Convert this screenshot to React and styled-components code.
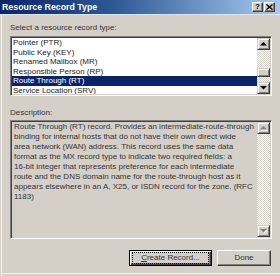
import React from 'react'
import styled, { createGlobalStyle } from 'styled-components'

const GlobalStyle = createGlobalStyle`
html, body {
    margin:0;
    padding:0;
    background:#d4d0c8;
}
body {
    font-family:"Liberation Sans", Arial, sans-serif;
}
`

const records = [
    'Pointer (PTR)',
    'Public Key (KEY)',
    'Renamed Mailbox (MR)',
    'Responsible Person (RP)',
    'Route Through (RT)',
    'Service Location (SRV)',
]

const description = [
    'Route Through (RT) record. Provides an intermediate-route-through',
    'binding for internal hosts that do not have their own direct wide',
    'area network (WAN) address. This record uses the same data',
    'format as the MX record type to indicate two required fields: a',
    '16-bit integer that represents preference for each intermediate',
    'route and the DNS domain name for the route-through host as it',
    'appears elsewhere in an A, X25, or ISDN record for the zone. (RFC',
    '1183)',
]

const Arrow = ({ down, disabled }) => (
    <svg width="8" height="5" viewBox="0 0 8 5">
        {disabled && <polygon points={down ? '1,1 8,1 4.5,4.5' : '4.5,1 8,4.5 1,4.5'} fill="#fff" />}
        <polygon
            points={down ? '0,0 7,0 3.5,3.5' : '3.5,0 7,3.5 0,3.5'}
            fill={disabled ? '#808080' : '#000'}
        />
    </svg>
)

const ScrollBar = ({ thumbTop, disabled }) => (
    <Bar>
        <ArrowBtn><Arrow disabled={disabled} /></ArrowBtn>
        <Track>
            {thumbTop !== undefined && <Thumb top={thumbTop} />}
        </Track>
        <ArrowBtn><Arrow down disabled={disabled} /></ArrowBtn>
    </Bar>
)

const App = () => {
    return (
        <>
            <GlobalStyle />
            <Window>
                <TitleBar>
                    <Title>Resource Record Type</Title>
                    <Caps>
                        <CapBtn>?</CapBtn>
                        <CapBtn>
                            <svg width="7" height="6" viewBox="0 0 7 6">
                                <path d="M0.5 0.5 L6.5 5.5 M6.5 0.5 L0.5 5.5" stroke="#000" strokeWidth="1.4" />
                            </svg>
                        </CapBtn>
                    </Caps>
                </TitleBar>
                <Body>
                    <Label>Select a resource record type:</Label>
                    <ListBox>
                        <Rows>
                            {records.map(r => (
                                <Row key={r} selected={r === 'Route Through (RT)'}>{r}</Row>
                            ))}
                        </Rows>
                        <ScrollBar thumbTop={18} />
                    </ListBox>
                    <Label top={12}>Description:</Label>
                    <DescBox>
                        <DescText>{description.join('\n')}</DescText>
                        <ScrollBar disabled />
                    </DescBox>
                    <Buttons>
                        <PushButton isDefault>
                            <Focus><u>C</u>reate Record...</Focus>
                        </PushButton>
                        <PushButton>Done</PushButton>
                    </Buttons>
                </Body>
            </Window>
        </>
    )
}

export default App


const Window = styled.div`
width:280px;
height:276px;
display:flex;
flex-direction:column;
background:#d4d0c8;
overflow:hidden;
`

const TitleBar = styled.div`
height:14px;
flex:none;
display:flex;
align-items:center;
justify-content:space-between;
background:linear-gradient(90deg, #0a246a 0%, #2c5894 40%, #a6caf0 100%);
`

const Title = styled.div`
color:#fff;
font-weight:bold;
font-size:8.8px;
padding-left:2px;
padding-bottom:1px;
white-space:nowrap;
`

const Caps = styled.div`
display:flex;
gap:1px;
margin-right:5px;
`

const CapBtn = styled.div`
width:11px;
height:10px;
box-sizing:border-box;
background:#d4d0c8;
border:1px solid;
border-color:#fff #404040 #404040 #fff;
box-shadow:inset -1px -1px #808080;
display:flex;
align-items:center;
justify-content:center;
font-size:8px;
font-weight:bold;
line-height:1;
color:#000;
`

const Body = styled.div`
flex:1;
display:flex;
flex-direction:column;
padding:8px 8px 0 10px;
box-shadow:inset 1px 0 #d4d0c8, inset 2px 0 #f4f3ef, inset 0 -2px #d4d0c8, inset 0 -3px #f4f3ef;
border-top:1px solid #e6e4de;
`

const Label = styled.div`
font-size:8px;
line-height:10px;
color:#333;
margin-top:${p => p.top || 0}px;
`

const Sunken = styled.div`
box-sizing:border-box;
display:flex;
border:1px solid;
border-color:#808080 #fff #fff #808080;
box-shadow:inset 1px 1px #404040, inset -1px -1px #d4d0c8;
padding:1px;
overflow:hidden;
`

const ListBox = styled(Sunken)`
height:60px;
margin-top:3px;
background:#fff;
`

const Rows = styled.div`
flex:1;
overflow:hidden;
`

const Row = styled.div`
height:9.5px;
line-height:9.5px;
font-size:8px;
padding-left:1px;
white-space:nowrap;
color:${p => (p.selected ? '#fff' : '#222')};
background:${p => (p.selected ? '#0a246a' : 'transparent')};
`

const Bar = styled.div`
width:13px;
flex:none;
display:flex;
flex-direction:column;
`

const ArrowBtn = styled.div`
height:12px;
flex:none;
box-sizing:border-box;
background:#d4d0c8;
border:1px solid;
border-color:#d4d0c8 #404040 #404040 #d4d0c8;
box-shadow:inset 1px 1px #fff, inset -1px -1px #808080;
display:flex;
align-items:center;
justify-content:center;
`

const Track = styled.div`
flex:1;
background:repeating-conic-gradient(#d4d0c8 0 25%, #fff 0 50%) 0 0 / 2px 2px;
`

const Thumb = styled.div`
height:9px;
margin-top:${p => p.top}px;
box-sizing:border-box;
background:#d4d0c8;
border:1px solid;
border-color:#d4d0c8 #404040 #404040 #d4d0c8;
box-shadow:inset 1px 1px #fff, inset -1px -1px #808080;
`

const DescBox = styled(Sunken)`
height:119px;
margin-top:2px;
background:#d4d0c8;
`

const DescText = styled.div`
flex:1;
font-size:8px;
line-height:10px;
padding-left:2px;
color:#333;
white-space:pre;
overflow:hidden;
`

const Buttons = styled.div`
display:flex;
justify-content:flex-end;
gap:5px;
margin-top:11px;
margin-right:1px;
`

const PushButton = styled.div`
height:16px;
width:${p => (p.isDefault ? '83px' : '54px')};
box-sizing:border-box;
display:flex;
align-items:center;
justify-content:center;
font-size:8px;
line-height:10px;
color:#333;
background:#d4d0c8;
border:1px solid;
border-color:${p => (p.isDefault ? '#000' : '#fff #404040 #404040 #fff')};
box-shadow:${p => (p.isDefault
        ? 'inset 1px 1px #fff, inset -1px -1px #404040, inset -2px -2px #808080'
        : 'inset -1px -1px #808080')};
`

const Focus = styled.div`
width:75px;
height:10px;
box-sizing:border-box;
outline:1px dotted #000;
text-align:center;
white-space:nowrap;
`
